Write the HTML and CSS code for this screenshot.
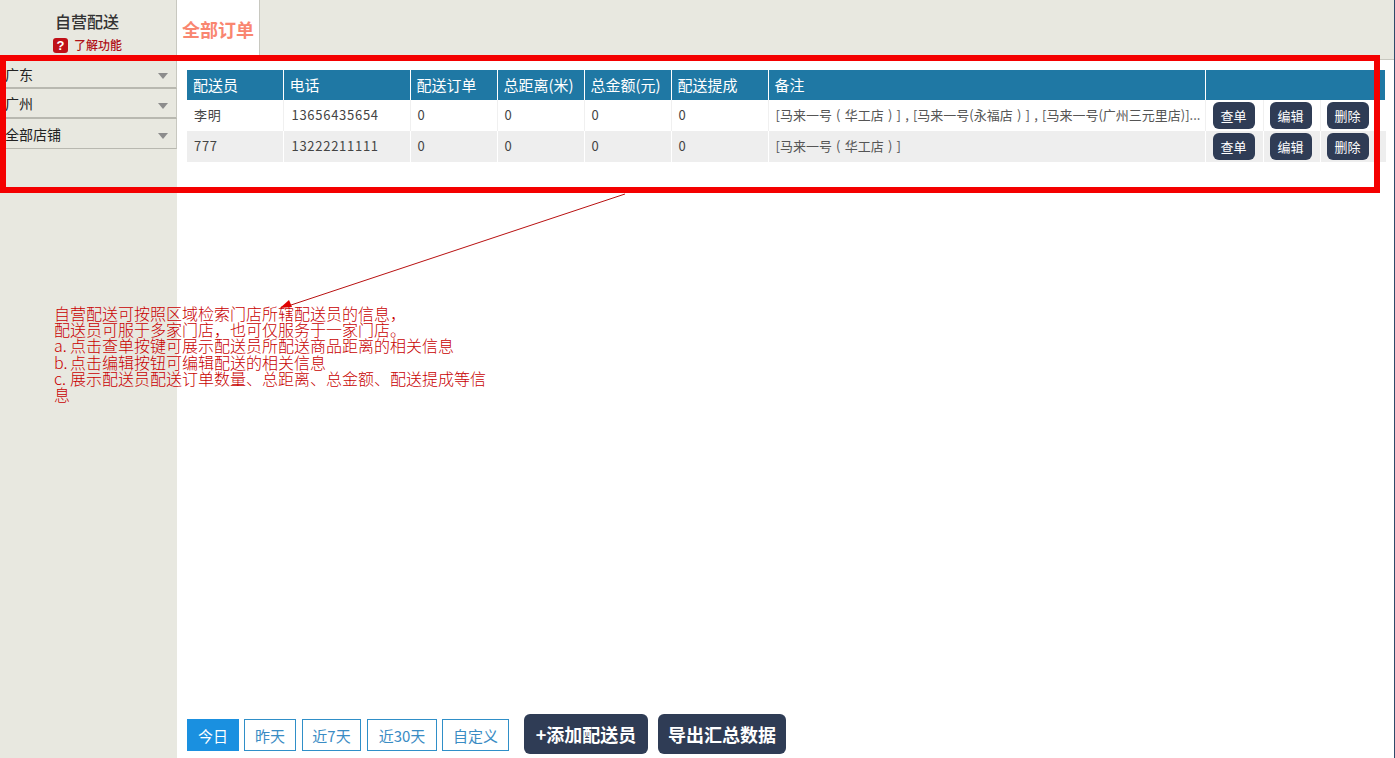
FILE: index.html
```html
<!DOCTYPE html>
<html lang="zh-CN">
<head>
<meta charset="utf-8">
<title>自营配送</title>
<link rel="stylesheet" href="styles.css">
</head>
<body>
<div class="page">
  <header class="topbar">
    <div class="brand">
      <div class="brand-title">自营配送</div>
      <div class="brand-help"><span class="help-icon">?</span><span>了解功能</span></div>
    </div>
    <div class="tab">全部订单</div>
  </header>
  <div class="body">
    <aside class="sidebar">
      <div class="select"><span>广东</span><i class="caret"></i></div>
      <div class="select"><span>广州</span><i class="caret"></i></div>
      <div class="select"><span>全部店铺</span><i class="caret"></i></div>
    </aside>
    <main class="main">
      <table class="grid">
        <colgroup>
          <col class="c1"><col class="c2"><col class="c3"><col class="c3"><col class="c3"><col class="c4"><col class="c5"><col class="c6a"><col class="c6b"><col class="c6c">
        </colgroup>
        <thead>
          <tr><th>配送员</th><th>电话</th><th>配送订单</th><th>总距离(米)</th><th>总金额(元)</th><th>配送提成</th><th>备注</th><th colspan="3"></th></tr>
        </thead>
        <tbody>
          <tr>
            <td>李明</td><td>13656435654</td><td>0</td><td>0</td><td>0</td><td>0</td>
            <td class="note">[马来一号 ( 华工店 ) ] , [马来一号(永福店 ) ] , [马来一号(广州三元里店)]...</td>
            <td class="ops"><button class="op">查单</button></td>
            <td class="ops"><button class="op">编辑</button></td>
            <td class="ops"><button class="op">删除</button></td>
          </tr>
          <tr>
            <td>777</td><td>13222211111</td><td>0</td><td>0</td><td>0</td><td>0</td>
            <td class="note">[马来一号 ( 华工店 ) ]</td>
            <td class="ops"><button class="op">查单</button></td>
            <td class="ops"><button class="op">编辑</button></td>
            <td class="ops"><button class="op">删除</button></td>
          </tr>
        </tbody>
      </table>
      <div class="footer">
        <div class="ranges">
          <button class="range active">今日</button>
          <button class="range">昨天</button>
          <button class="range">近7天</button>
          <button class="range">近30天</button>
          <button class="range">自定义</button>
        </div>
        <button class="action add">+添加配送员</button>
        <button class="action export">导出汇总数据</button>
      </div>
    </main>
  </div>
  <div class="highlight"></div>
  <svg class="arrow" width="360" height="130" viewBox="0 0 360 130">
    <line x1="345" y1="1" x2="8" y2="113" stroke="#b81010" stroke-width="1"/>
    <polygon points="0,115 9,107 12,114" fill="#e00000"/>
  </svg>
  <div class="annotation">
    <p>自营配送可按照区域检索门店所辖配送员的信息，</p>
    <p>配送员可服于多家门店，也可仅服务于一家门店。</p>
    <p><span class="mark">a.</span>点击查单按键可展示配送员所配送商品距离的相关信息</p>
    <p><span class="mark">b.</span>点击编辑按钮可编辑配送的相关信息</p>
    <p><span class="mark">c.</span>展示配送员配送订单数量、总距离、总金额、配送提成等信息</p>
  </div>
</div>
</body>
</html>
```
FILE: styles.css
```css
* { box-sizing: border-box; }
html, body { margin: 0; height: 100%; overflow: hidden; }
body { background: #fff; font-family: "Noto Sans CJK SC", "Open Sans", sans-serif; color: #333; }
.page { position: relative; width: 1395px; height: 758px; display: flex; flex-direction: column; border-right: 1px solid #2f4a6a; }
.topbar { height: 60px; flex: none; display: flex; background: #e8e8e0; border-bottom: 1px solid #c8c8c0; }
.brand { width: 176px; flex: none; display: flex; flex-direction: column; align-items: center; padding-top: 11px; }
.brand-title { font-size: 16px; line-height: 20px; color: #333; font-weight: 500; margin-left: -2px; }
.brand-help { display: flex; align-items: center; gap: 6px; margin-top: 6px; margin-left: -1px; font-size: 12px; line-height: 16px; color: #b01018; font-weight: 500; }
.help-icon { width: 15px; height: 15px; border-radius: 3px; background: #c01018; color: #fff; font: bold 13px/15px "Liberation Sans", sans-serif; text-align: center; }
.tab { width: 84px; height: 60px; background: #fff; border-left: 1px solid #c8c8c0; border-right: 1px solid #c8c8c0; color: #f98670; font-size: 18px; font-weight: 700; line-height: 58px; text-align: center; }
.body { flex: 1; display: flex; min-height: 0; }
.sidebar { width: 177px; flex: none; background: #e8e8e0; display: flex; flex-direction: column; }
.select { height: 30px; display: flex; align-items: center; justify-content: space-between; padding: 0 8px 0 5px; border-bottom: 2px solid #b8b8b0; border-right: 1px solid #c8c8c0; font-size: 14px; color: #222; }
.select:first-child { height: 29px; }
.select:last-child { border-bottom-width: 1px; }
.caret { width: 0; height: 0; margin-top: 5px; border-left: 5.5px solid transparent; border-right: 5.5px solid transparent; border-top: 6px solid #8c8c8c; }
.main { flex: 1; min-width: 0; display: flex; flex-direction: column; justify-content: space-between; padding: 10px 7px 4px 10px; }
.grid { border-collapse: collapse; table-layout: fixed; width: 1199px; font-size: 13px; }
.c1 { width: 96px; } .c2 { width: 127px; } .c3 { width: 87px; } .c4 { width: 97px; } .c5 { width: 437px; }
.c6a { width: 58px; } .c6b { width: 57px; } .c6c { width: 66px; }
.grid th { height: 30px; background: #1f78a4; color: #fff; font-size: 15px; font-weight: 400; text-align: left; padding: 0 6px 2px; border-left: 1px solid #fff; white-space: nowrap; }
.grid th:last-child { border-right: 3px solid #fff; }
.grid th:first-child, .grid td:first-child { border-left: 0; }
.grid td { height: 31px; padding: 0 7px 2px; border-left: 1px solid #f0f0f0; color: #444; white-space: nowrap; overflow: hidden; letter-spacing: .72px; }
.grid td:nth-child(2) { padding-left: 8px; }
.grid tbody tr:nth-child(2) td { background: #eeeeee; border-left-color: #fff; }
.grid td.note { font-size: 13px; color: #555; letter-spacing: 0; word-spacing: 1.3px; }
.grid td.ops { padding: 0 0 0 6px; overflow: visible; }
.grid td.ops:nth-child(8) { padding-left: 7px; }
.op { display: block; width: 42px; height: 27px; padding: 0; border: 0; border-radius: 6px; background: #2f3c55; color: #fff; font: 13px "Noto Sans CJK SC", sans-serif; }
.footer { display: flex; align-items: center; gap: 10px; }
.ranges { display: flex; gap: 5px; margin-right: 5px; margin-top: 2px; }
.range { height: 32px; padding: 0; background: #fff; border: 1px solid #2f8fc8; color: #3a8cc4; font: 15px "Noto Sans CJK SC", sans-serif; }
.range:nth-child(1) { width: 52px; } .range:nth-child(2) { width: 52px; } .range:nth-child(3) { width: 59px; margin-left: 1px; } .range:nth-child(4) { width: 70px; margin-left: 1px; } .range:nth-child(5) { width: 67px; }
.range.active { background: #1a90e0; border-color: #1a90e0; color: #fff; }
.action { height: 40px; padding: 0; border: 0; border-radius: 6px; background: #2f3c55; color: #fff; font: 700 18px "Noto Sans CJK SC", sans-serif; }
.action.add { width: 124px; }
.action.export { width: 128px; }
.highlight { position: absolute; left: 0; top: 55px; width: 1380px; height: 138px; border: 6px solid #f40000; pointer-events: none; }
.arrow { position: absolute; left: 280px; top: 193px; }
.annotation { position: absolute; left: 54px; top: 305px; width: 434px; color: #c80000; font-size: 16px; font-weight: 300; line-height: 16.2px; }
.annotation p { margin: 0; }
.mark { display: inline-block; width: 16px; }
```
